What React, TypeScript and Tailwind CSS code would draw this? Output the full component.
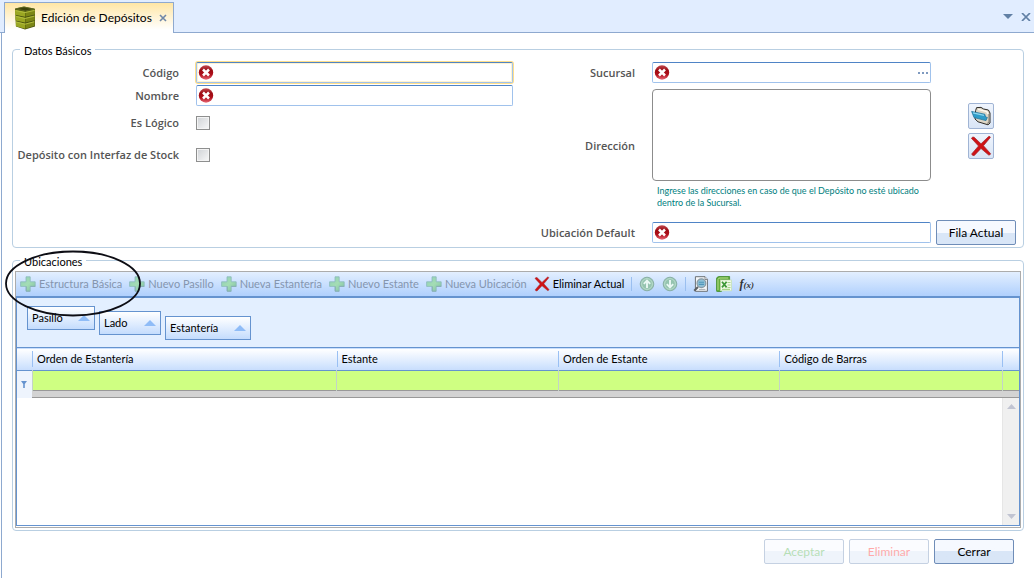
import React from "react";

function ErrorBadge() {
  return (
    <svg className="size-4 shrink-0" viewBox="0 0 16 16" aria-hidden="true">
      <defs>
        <linearGradient id="badge" x1="0" y1="0" x2="0" y2="1">
          <stop offset="0" stopColor="#c04a50" />
          <stop offset="0.35" stopColor="#9c0a12" />
          <stop offset="0.65" stopColor="#b0101c" />
          <stop offset="1" stopColor="#e86a78" />
        </linearGradient>
      </defs>
      <circle cx="8" cy="7.5" r="7.2" fill="url(#badge)" />
      <path d="M5 4.5 L11 10.5 M11 4.5 L5 10.5" stroke="#fff" strokeWidth="2.5" />
    </svg>
  );
}

function PlusIcon() {
  return (
    <svg className="size-4 shrink-0" viewBox="0 0 16 16" aria-hidden="true">
      <defs>
        <linearGradient id="plus" x1="0" y1="0" x2="1" y2="1">
          <stop offset="0" stopColor="#8fcfb8" />
          <stop offset="0.5" stopColor="#a4ddb4" />
          <stop offset="1" stopColor="#7fbfa4" />
        </linearGradient>
      </defs>
      <path
        d="M6 0.8 H10.2 V5.8 H15.2 V10.4 H10.2 V15.2 H6 V10.4 H0.6 V5.8 H6 Z"
        fill="url(#plus)"
        stroke="#8ab9bd"
        strokeWidth="0.8"
      />
      <path d="M6.3 10.4 V15.2 H10.2 M10.2 10.4 H15.2" fill="none" stroke="#86a9b3" strokeWidth="0.8" />
    </svg>
  );
}

function CrossIcon({ className }: { className: string }) {
  return (
    <svg className={className} viewBox="0 0 16 16" aria-hidden="true">
      <path
        d="M1 2.4 Q2 1 3 1.6 L8 6.4 L13.6 1 Q14.6 0.8 14.8 1.8 L9.8 7.8 L15 13.6 Q14.6 14.8 13.6 14.6 L8 9.8 L3 15 Q1.4 15 1.2 13.8 L6.2 8 Z"
        fill="#cf1216"
        stroke="#a0262a"
        strokeWidth="0.5"
      />
    </svg>
  );
}

function ArrowCircle({ down }: { down?: boolean }) {
  return (
    <svg className="size-4 shrink-0" viewBox="0 0 16 16" aria-hidden="true">
      <circle cx="8" cy="8" r="6.8" fill="#95c4b0" stroke="#89b0a6" />
      <circle cx="8" cy="8" r="5.4" fill="none" stroke="#b9dccc" />
      <path
        d={down ? "M8 4 V11.2 M4.8 8.2 L8 11.4 L11.2 8.2" : "M8 12 V4.8 M4.8 7.8 L8 4.6 L11.2 7.8"}
        fill="none"
        stroke="#e9f7f4"
        strokeWidth="1.9"
      />
    </svg>
  );
}

function PreviewIcon() {
  return (
    <svg className="size-4 shrink-0" viewBox="0 0 16 16" aria-hidden="true">
      <path d="M2.4 0.7 H12 L14.4 3.2 V15.3 H2.4 Z" fill="#f6f8fa" stroke="#6c7074" />
      <path d="M12 0.7 V3.5 H14.4" fill="#fff" stroke="#6c7074" strokeWidth="0.8" />
      <circle cx="8.4" cy="7.2" r="4.4" fill="#8fc0d6" stroke="#8a9aa4" strokeWidth="1.2" />
      <path d="M5.8 6.2 H11 M5.8 8.4 H11" stroke="#4f96ba" strokeWidth="1.1" />
      <path d="M5 11 L1.2 14.8" stroke="#5c6064" strokeWidth="2" />
      <path d="M6 13.4 H12.4" stroke="#a9aeb2" />
    </svg>
  );
}

function SheetIcon() {
  return (
    <svg className="size-4 shrink-0" viewBox="0 0 16 16" aria-hidden="true">
      <path d="M3 0.5 H13.6 V4 H5.4 V15.5 H1.2 Q0.4 15.5 0.4 14.5 V3 Q0.6 0.8 3 0.5 Z" fill="#64ad3c" stroke="#3f8a2c" strokeWidth="0.8" />
      <path d="M2 14 V3.6 Q2.2 2 4 2 H12" fill="none" stroke="#b4dd8e" />
      <rect x="4.6" y="4" width="10.8" height="10.8" fill="#f1fae8" stroke="#c4e0b0" strokeWidth="0.7" />
      <path d="M11.5 6.5 H14.5 M11.5 9 H14.5 M11.5 11.5 H14.5 M6 13.3 H14" stroke="#a4d488" strokeWidth="1.2" />
      <path d="M6 5.8 L10.6 11.4 M10.6 5.8 L6 11.4" stroke="#3e9838" strokeWidth="1.8" />
    </svg>
  );
}

function FolderIcon() {
  return (
    <svg className="size-5" viewBox="0 0 20 20" aria-hidden="true">
      <path d="M4.6 4.6 L5.6 1.6 L10 1.4 L12.6 3 L17.4 4 L19 7 V17 L17 18.8 L7 15.8 L4 13 Z" fill="#ddd6c6" stroke="#2e2c28" />
      <path d="M7 3.4 L15.8 5.6 L17 8" fill="none" stroke="#fffaf0" strokeWidth="1.4" />
      <path d="M16.4 17.6 L18 16 V8" fill="none" stroke="#8b867b" strokeWidth="1.2" />
      <path d="M0.6 5.4 L13.8 8.2 L14.6 11 L16.4 11.4 L15 14.6 L3 11.6 Z" fill="#2f9cc8" stroke="#1d6f96" strokeWidth="0.7" />
      <path d="M2 6.8 L13 9.4" stroke="#8fd6ee" strokeWidth="1.2" />
    </svg>
  );
}

function DepotIcon() {
  return (
    <svg className="h-6 w-6 shrink-0" viewBox="0 0 24 24" aria-hidden="true">
      <path d="M2 2.4 L11 0.6 L22 2.8 V20.4 L12 23.4 L3 20.6 Z" fill="#4a5210" />
      <path d="M3 2.8 L11 1 L21 3 L12.4 5 Z" fill="#3c4208" stroke="#717a28" strokeWidth="0.6" />
      <path d="M2 3.8 L12 5.8 V10.8 L2 8.8 Z M2.4 9.6 L12 11.7 V16.6 L2.4 14.5 Z M2.8 15.2 L12 17.4 V22.8 L2.8 20.2 Z" fill="#9aa622" />
      <path d="M12.4 5.8 L22 3.6 V8.4 L12.4 10.8 Z M12.4 11.7 L21.8 9.2 V14.2 L12.4 16.6 Z M12.4 17.4 L21.6 15 V19.8 L12.4 22.8 Z" fill="#7c8614" />
      <path d="M2.6 4.6 L12 6.6 L21.6 4.4 M2.8 10.4 L12 12.5 L21.4 10.2 M3 16 L12 18.2 L21.2 15.8" fill="none" stroke="#b4be40" strokeWidth="0.9" />
    </svg>
  );
}

const labelStyle =
  "justify-self-end whitespace-nowrap font-['Open_Sans','Noto_Sans',sans-serif] text-[11px] leading-4 font-semibold text-[#555]";
const boxStyle =
  "flex h-[21px] items-center rounded-xs border border-[#a0c2ec] border-t-[#4f84c6] bg-white pl-px pr-1";
const inputStyle = "min-w-0 flex-1 bg-transparent pl-1 text-xs outline-none";
const iconButton =
  "flex size-[26px] items-center justify-center rounded-xs border border-[#a0b4d4] bg-linear-to-b from-[#f0f5fd] to-[#d9e5f6]";
const glassButton =
  "h-[25px] w-20 rounded-xs border border-[#6f8db8] bg-linear-to-b from-[#f6f9ff] from-50% to-[#d9e6f7] to-50% text-xs";

function Check({ id, label }: { id: string; label: string }) {
  return (
    <>
      <label htmlFor={id} className={labelStyle}>
        {label}
      </label>
      <input
        id={id}
        type="checkbox"
        className="size-[14px] appearance-none border border-[#8e8f8f] bg-linear-to-br from-[#cfd2d6] to-[#f8f8f8] shadow-[inset_0_0_0_1px_#f4f4f4]"
      />
    </>
  );
}

function ToolButton({ label, icon, disabled }: { label: string; icon: React.ReactNode; disabled?: boolean }) {
  return (
    <button
      type="button"
      disabled={disabled}
      className="flex shrink-0 items-center gap-[3px] text-[11px] leading-4 text-black disabled:text-[#8495ae]"
    >
      {icon}
      {label}
    </button>
  );
}

function GroupChip({ label, className }: { label: string; className: string }) {
  return (
    <button
      type="button"
      className={`flex h-6 items-center justify-between border border-[#6593cf] bg-linear-to-b from-white to-[#c4dcfd] px-1 text-[11px] ${className}`}
    >
      {label}
      <svg className="h-[6px] w-3" viewBox="0 0 12 6" aria-hidden="true">
        <path d="M6 0 L12 6 H0 Z" fill="#8fbcf7" />
      </svg>
    </button>
  );
}

const columns = ["Orden de Estantería", "Estante", "Orden de Estante", "Código de Barras", ""];
const additions = ["Estructura Básica", "Nuevo Pasillo", "Nueva Estantería", "Nuevo Estante", "Nueva Ubicación"];

export default function App() {
  return (
    <div className="relative flex min-h-screen flex-col bg-white font-['Lato','Noto_Sans',sans-serif] text-black">
      <header className="flex h-[33px] items-end justify-between border-b border-[#8ea9cf] bg-[#e1edff] pl-1">
        <div className="-mb-px flex h-[31px] items-center border border-b-0 border-[#8ea9cf] bg-linear-to-b from-[#ffe6a4] to-white to-90% pr-[6px] pl-2">
          <DepotIcon />
          <h1 className="pl-1 text-xs leading-4">Edición de Depósitos</h1>
          <button type="button" aria-label="Cerrar pestaña" className="ml-[7px]">
            <svg className="size-2" viewBox="0 0 8 8" aria-hidden="true">
              <path d="M1 1 L7 7 M7 1 L1 7" stroke="#6f87a8" strokeWidth="1.6" />
            </svg>
          </button>
        </div>
        <div className="flex items-center gap-2 self-center pt-px pr-[3px]">
          <button type="button" aria-label="Lista de pestañas">
            <svg className="h-[5px] w-[10px]" viewBox="0 0 10 5" aria-hidden="true">
              <path d="M0 0 H10 L5 5 Z" fill="#6180a5" />
            </svg>
          </button>
          <button type="button" aria-label="Cerrar">
            <svg className="h-2 w-[10px]" viewBox="0 0 10 8" aria-hidden="true">
              <path d="M1 0 L9 8 M9 0 L1 8" stroke="#6180a5" strokeWidth="1.7" />
            </svg>
          </button>
        </div>
      </header>

      <main className="ml-px flex-1 border-l border-[#8ea9cf] px-[10px] pt-[9px]">
        <fieldset className="rounded-sm border border-[#b9cfe2] px-[7px] pb-[2px]">
          <legend className="px-1 pt-[3px] text-[11px] leading-3">Datos Básicos</legend>
          <div className="grid grid-cols-2 gap-x-[10px] pt-[5px]">
            <div className="grid grid-cols-[159px_1fr] content-start items-center gap-x-[17px]">
              <label htmlFor="codigo" className={labelStyle}>
                Código
              </label>
              <div className={`${boxStyle} relative shadow-[0_0_0_1px_#ffdf8a,inset_0_0_0_1px_#fff3cf]`}>
                <ErrorBadge />
                <input id="codigo" className={inputStyle} />
              </div>
              <div className="col-span-2 h-[2px]" />
              <label htmlFor="nombre" className={labelStyle}>
                Nombre
              </label>
              <div className={boxStyle}>
                <ErrorBadge />
                <input id="nombre" className={inputStyle} />
              </div>
              <div className="col-span-2 h-[9px]" />
              <Check id="logico" label="Es Lógico" />
              <div className="col-span-2 h-4" />
              <Check id="interfaz" label="Depósito con Interfaz de Stock" />
            </div>

            <div className="grid grid-cols-[112px_1fr_80px] items-center">
              <label htmlFor="sucursal" className={labelStyle}>
                Sucursal
              </label>
              <div className={`${boxStyle} mr-[5px] ml-[17px]`}>
                <ErrorBadge />
                <input id="sucursal" className={inputStyle} />
                <button type="button" aria-label="Buscar sucursal" className="-mr-1">
                  <svg className="h-[2px] w-3" viewBox="0 0 12 2" aria-hidden="true">
                    <path d="M0 0 H2 V2 H0 Z M4 0 H6 V2 H4 Z M8 0 H10 V2 H8 Z" fill="#7f9ac0" />
                  </svg>
                </button>
              </div>
              <div />
              <label htmlFor="direccion" className={`${labelStyle} pb-3`}>
                Dirección
              </label>
              <div className="mr-[5px] mb-[11px] ml-[17px] pt-[6px]">
                <textarea
                  id="direccion"
                  className="block h-[92px] w-full resize-none rounded-sm border border-[#8c8c8c] bg-white p-1 text-xs outline-none"
                />
                <p className="pt-1 pl-[5px] text-[9px] leading-3 text-[#008080]">
                  Ingrese las direcciones en caso de que el Depósito no esté ubicado dentro de la Sucursal.
                </p>
              </div>
              <div className="mt-5 ml-8 flex flex-col items-start gap-1 self-start">
                <button type="button" aria-label="Abrir dirección" className={iconButton}>
                  <FolderIcon />
                </button>
                <button type="button" aria-label="Quitar dirección" className={iconButton}>
                  <CrossIcon className="size-[22px]" />
                </button>
              </div>
              <label htmlFor="ubicacion" className={labelStyle}>
                Ubicación Default
              </label>
              <div className={`${boxStyle} mr-[5px] ml-[17px]`}>
                <ErrorBadge />
                <input id="ubicacion" className={inputStyle} />
              </div>
              <button type="button" className={glassButton}>
                Fila Actual
              </button>
            </div>
          </div>
        </fieldset>

        <fieldset className="mt-[5px] rounded-sm border border-[#b9cfe2] px-[2px] pb-[2px]">
          <legend className="ml-[5px] px-1 pt-[3px] text-[11px] leading-3">Ubicaciones</legend>
          <div className="mt-[3px] border border-[#acacac] pb-px">
            <div className="box-content flex h-6 items-center gap-[7px] border-b-2 border-[#6593cf] bg-linear-to-b from-[#e3efff] to-[#b0d0fd] pl-1">
              {additions.map((label) => (
                <ToolButton key={label} label={label} icon={<PlusIcon />} disabled />
              ))}
              <ToolButton label="Eliminar Actual" icon={<CrossIcon className="size-4 shrink-0" />} />
              <div className="h-[14px] w-px bg-[#9abff0]" />
              <button type="button" disabled aria-label="Subir">
                <ArrowCircle />
              </button>
              <button type="button" disabled aria-label="Bajar">
                <ArrowCircle down />
              </button>
              <div className="h-[14px] w-px bg-[#9abff0]" />
              <button type="button" aria-label="Vista previa">
                <PreviewIcon />
              </button>
              <button type="button" aria-label="Exportar">
                <SheetIcon />
              </button>
              <button type="button" className="font-['Liberation_Serif',serif] text-xs leading-4 font-bold text-[#333] italic">
                f<span className="text-[9px]">(x)</span>
              </button>
            </div>

            <div className="border border-t-0 border-[#6593cf]">
              <div className="flex h-[49px] items-start gap-1 bg-[#e3efff] pt-2 pl-[10px]">
                <GroupChip label="Pasillo" className="w-[68px]" />
                <GroupChip label="Lado" className="mt-[5px] w-[62px]" />
                <GroupChip label="Estantería" className="mt-[10px] w-[86px]" />
              </div>
              <table className="w-full table-fixed border-collapse text-left text-[11px]">
                <colgroup>
                  <col className="w-[15px]" />
                  <col className="w-[30.4%]" />
                  <col className="w-[22.1%]" />
                  <col className="w-[22.1%]" />
                  <col />
                  <col className="w-[17px]" />
                </colgroup>
                <thead>
                  <tr className="h-[23px] border-y border-[#6593cf] bg-linear-to-b from-white to-[#c8defd]">
                    <th aria-label="Filtro" className="p-0" />
                    {columns.map((name, i) => (
                      <th key={i} className="p-0 font-normal">
                        <div className="flex h-4 items-center border-l border-[#9ac0f3] pl-1">{name}</div>
                      </th>
                    ))}
                  </tr>
                </thead>
                <tbody>
                  <tr className="h-5">
                    <td rowSpan={2} className="bg-[#eef4fd] p-0">
                      <svg className="mx-auto h-[7px] w-[6px]" viewBox="0 0 6 7" aria-hidden="true">
                        <path d="M0 0 H6 L3.8 3 V7 H2.2 V3 Z" fill="#6593cf" />
                      </svg>
                    </td>
                    {columns.map((_, i) => (
                      <td key={i} className="border-l border-[#c3d3c8] bg-[#cfff82] p-0" />
                    ))}
                  </tr>
                  <tr className="h-[7px]">
                    <td colSpan={5} className="border-y border-[#999] bg-[#d3d3d3] p-0" />
                  </tr>
                </tbody>
              </table>
              <div className="flex h-[127px] justify-end">
                <div className="flex w-[17px] flex-col items-center justify-between border-l border-[#e6e6e6] bg-[#f0f0f0] py-[6px]">
                  <svg className="h-[5px] w-[9px]" viewBox="0 0 9 5" aria-hidden="true">
                    <path d="M4.5 0 L9 5 H0 Z" fill="#c1c4d2" />
                  </svg>
                  <svg className="h-[5px] w-[9px]" viewBox="0 0 9 5" aria-hidden="true">
                    <path d="M0 0 H9 L4.5 5 Z" fill="#c1c4d2" />
                  </svg>
                </div>
              </div>
            </div>
          </div>
        </fieldset>

        <footer className="flex justify-end gap-[5px] pt-2 pr-[10px] pb-3">
          <button type="button" disabled className={`${glassButton} text-[#4cae4c] opacity-40`}>
            Aceptar
          </button>
          <button type="button" disabled className={`${glassButton} text-[#ff2a2a] opacity-40`}>
            Eliminar
          </button>
          <button type="button" className={glassButton}>
            Cerrar
          </button>
        </footer>
      </main>

      <svg className="pointer-events-none absolute top-[250px] left-[5px] h-[67px] w-[137px]" viewBox="0 0 137 67" aria-hidden="true">
        <ellipse cx="68" cy="33.5" rx="67" ry="32" fill="none" stroke="#0d0d14" strokeWidth="1.8" />
      </svg>
    </div>
  );
}
